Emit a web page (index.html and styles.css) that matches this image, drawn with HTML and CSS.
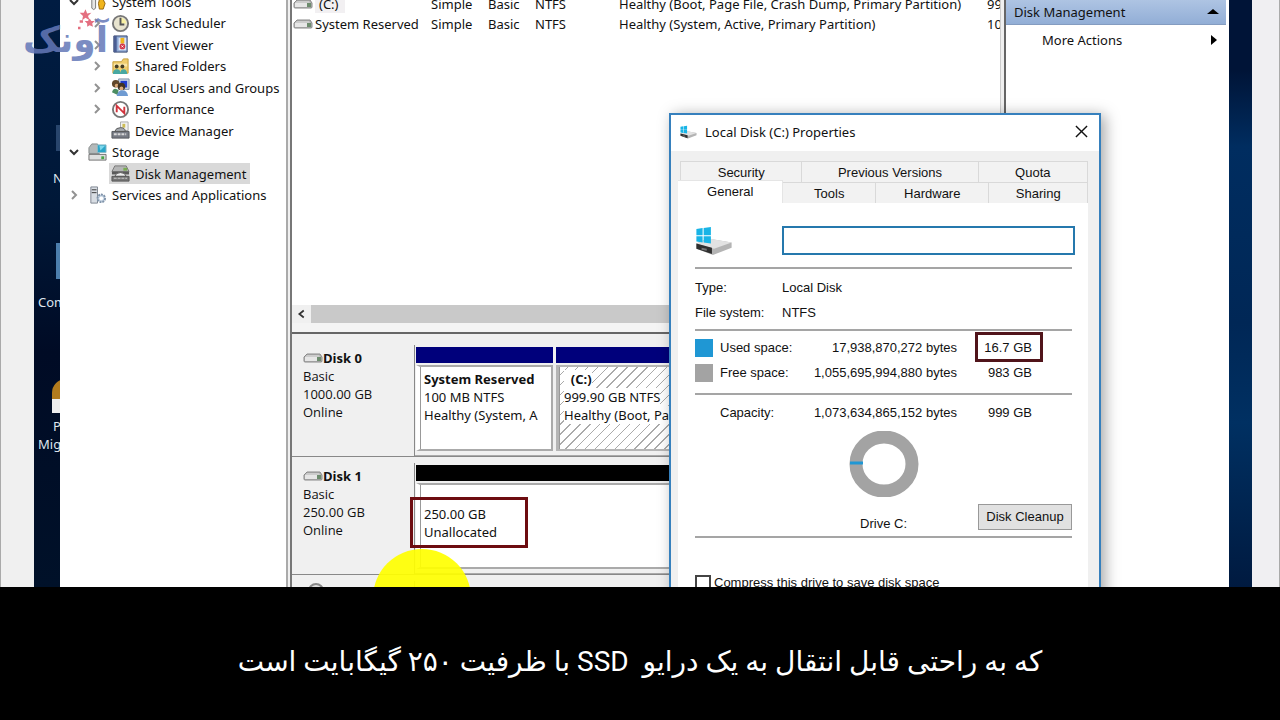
FILE: index.html
```html
<!DOCTYPE html>
<html lang="fa">
<head>
<meta charset="utf-8">
<title>Disk Management</title>
<link rel="stylesheet" href="styles.css">
</head>
<body>
<svg class="defs" aria-hidden="true">
  <symbol id="right" viewBox="0 0 16 16"><path d="M6 4l4 4-4 4" fill="none" stroke="#929292" stroke-width="2"/></symbol>
  <symbol id="down" viewBox="0 0 16 16"><path d="M4 6l4 4 4-4" fill="none" stroke="#333" stroke-width="2"/></symbol>
  <symbol id="drive" viewBox="0 0 20 12"><path d="M4 2h13l2 3v4q0 1-1 1H2q-1 0-1-1V5z" fill="#b5b5b5" stroke="#888"/><path d="M4 3h12l1 2H2z" fill="#ccc"/><path d="M2 5h12v4H2z" fill="#e6e6e6"/><path d="M14 5h4v4h-4z" fill="#6d8c6e"/></symbol>
  <symbol id="windrive" viewBox="0 0 36 28"><path d="M1 17l11-5 23 4v5l-18 7L1 22z" fill="#b4b4b4"/><path d="M1 17l12-5 22 4-17 6z" fill="#e2e2e2"/><path d="M1 17l15 4v6L1 22z" fill="#2f2f2f"/><path d="M6 21l5 1v2l-5-1z" fill="#777"/><path d="M1 3l6-1v7H1zm7-1l7-1v8H8zM1 10h6v6l-6-1zm7 0h7v7l-7-1z" fill="#18b4e6"/></symbol>
</svg>

<main class="screen">
  <div class="gutter gutter-left"></div>
  <div class="desktop desktop-left">
    <div class="shortcut s1"><span class="pic"></span><span class="short">N</span></div>
    <div class="shortcut s2"><span class="pic"></span><span>Computer</span></div>
    <div class="shortcut s3"><span class="pic gold"></span><span class="short">P</span><span>Migrate</span></div>
  </div>

  <section class="window">
    <nav class="tree">
      <ul>
        <li><button class="chev" aria-label="Collapse"><svg><use href="#down"/></svg></button><span class="item"><svg class="ico" viewBox="0 0 20 20"><path d="M4 1h4v16q-2 3-4 0z" fill="#e6e6e6" stroke="#777"/><path d="M12 1h4v7l2 4-2 6h-4l-1-6 1-4z" fill="#f0b51d" stroke="#93640c"/></svg>System Tools</span></li>
        <li class="sub"><button class="chev" aria-label="Expand"><svg><use href="#right"/></svg></button><span class="item"><svg class="ico" viewBox="0 0 20 20"><circle cx="10" cy="10" r="8" fill="#e8e4cf" stroke="#777" stroke-width="2"/><path d="M10 4a6 6 0 0 1 6 6h-6z" fill="#f8f1a4"/><path d="M10 4v7h4" fill="none" stroke="#555" stroke-width="2"/></svg>Task Scheduler</span></li>
        <li class="sub"><button class="chev" aria-label="Expand"><svg><use href="#right"/></svg></button><span class="item"><svg class="ico" viewBox="0 0 20 20"><path d="M3 1h14v17H3z" fill="#8da8d4" stroke="#384870"/><path d="M3 1h3v17H3z" fill="#4b5d92"/><path d="M8 3h8v13H8z" fill="#dde4f3"/><path d="M10 3h4v6h-4z" fill="#f0b51d"/><circle cx="12" cy="12" r="3" fill="#d33648"/><path d="M11 11l2 2m0-2l-2 2" stroke="#fff"/></svg>Event Viewer</span></li>
        <li class="sub"><button class="chev" aria-label="Expand"><svg><use href="#right"/></svg></button><span class="item"><svg class="ico" viewBox="0 0 20 20"><path d="M2 5h9l2-3h5v15H2z" fill="#f0cd6c" stroke="#c49c37"/><path d="M3 7h14v3H3z" fill="#f9e6a8"/><circle cx="6" cy="10" r="2" fill="#463e25"/><circle cx="12" cy="10" r="2" fill="#463e25"/><path d="M2 18q0-5 4-5t4 4q0-4 3-4 4 0 4 5z" fill="#48a8a2"/></svg>Shared Folders</span></li>
        <li class="sub"><button class="chev" aria-label="Expand"><svg><use href="#right"/></svg></button><span class="item"><svg class="ico" viewBox="0 0 20 20"><path d="M8 1h11v11H8z" fill="#c9d4e4" stroke="#8290a5"/><path d="M10 3h7v7h-7z" fill="#203ccc"/><circle cx="5" cy="6" r="4" fill="#60472b"/><circle cx="6" cy="8" r="2" fill="#dcaa79"/><circle cx="11" cy="9" r="4" fill="#423323"/><circle cx="11" cy="11" r="2" fill="#dcaa79"/><path d="M1 15q2-6 7-2l-1 5z" fill="#4b8d61"/><path d="M6 19q1-6 6-6t6 6z" fill="#6f9bd2"/></svg>Local Users and Groups</span></li>
        <li class="sub"><button class="chev" aria-label="Expand"><svg><use href="#right"/></svg></button><span class="item"><svg class="ico" viewBox="0 0 20 20"><circle cx="10" cy="10" r="8" fill="#fff" stroke="#777" stroke-width="2"/><path d="M6 13V6l8 8V7" fill="none" stroke="#d1323b" stroke-width="2"/></svg>Performance</span></li>
        <li class="sub"><span class="chev"></span><span class="item"><svg class="ico" viewBox="0 0 20 20"><path d="M10 1h8v9h-8z" fill="#f1f1f1" stroke="#aaa"/><path d="M12 3h3v4h-3z" fill="#cdbd55"/><path d="M1 11h18v7H1z" fill="#777b84" stroke="#53565c"/><path d="M4 11q1-4 6-4t5 4z" fill="#a5a9af" stroke="#555"/><path d="M3 14h13" stroke="#d9d9d9" stroke-width="2" stroke-dasharray="3 1"/></svg>Device Manager</span></li>
        <li><button class="chev" aria-label="Collapse"><svg><use href="#down"/></svg></button><span class="item"><svg class="ico" viewBox="0 0 20 20"><path d="M4 1h6l2 10H1V5z" fill="#b4b9ba" stroke="#85898a"/><path d="M10 2h9v8h-9z" fill="#29a5c8" stroke="#8bb9c6"/><path d="M12 3h6l-5 5z" fill="#7cd7ec"/><path d="M1 12h18v6H1z" fill="#dedede" stroke="#717171"/><path d="M14 14h3v3h-3z" fill="#4aa647"/></svg>Storage</span></li>
        <li class="sub"><span class="chev"></span><span class="item selected"><svg class="ico" viewBox="0 0 20 20"><path d="M4 2h12l3 6H1z" fill="#b4b5b5" stroke="#777"/><path d="M1 8h18v3H1z" fill="#5b5b5b"/><path d="M13 4h4v3h-4z" fill="#79ac51"/><path d="M4 13q1-4 6-4t6 4z" fill="#eee" stroke="#555"/><path d="M1 13h18v5H1z" fill="#777" stroke="#555"/><path d="M3 15h14" stroke="#ccc" stroke-dasharray="3 1"/></svg>Disk Management</span></li>
        <li><button class="chev" aria-label="Expand"><svg><use href="#right"/></svg></button><span class="item"><svg class="ico" viewBox="0 0 20 20"><path d="M3 1h7v17H3z" fill="#d8dde3" stroke="#7d858f"/><path d="M4 4h5M4 7h5" stroke="#333"/><circle cx="14" cy="13" r="4" fill="#c1d0e0" stroke="#8094aa" stroke-width="2" stroke-dasharray="2 1"/><circle cx="14" cy="13" r="2" fill="#fff"/></svg>Services and Applications</span></li>
      </ul>
    </nav>
    <div class="splitter"></div>

    <div class="center">
      <div class="volumes">
        <table>
          <tr><td class="c-name"><svg class="drv"><use href="#drive"/></svg><span class="cell-hot">(C:)</span></td><td class="c-lay">Simple</td><td class="c-type">Basic</td><td class="c-fs">NTFS</td><td class="c-stat">Healthy (Boot, Page File, Crash Dump, Primary Partition)</td><td>99</td></tr>
          <tr><td class="c-name"><svg class="drv"><use href="#drive"/></svg>System Reserved</td><td>Simple</td><td>Basic</td><td>NTFS</td><td>Healthy (System, Active, Primary Partition)</td><td>100</td></tr>
        </table>
      </div>
      <div class="hscroll"><button aria-label="Scroll left"><svg viewBox="0 0 16 16"><path d="M10 4L5 8l5 4" fill="none" stroke="#333" stroke-width="2"/></svg></button><span class="thumb"></span></div>
      <div class="disks">
        <div class="disk">
          <div class="disk-label"><strong><svg class="drv"><use href="#drive"/></svg>Disk 0</strong><span>Basic</span><span>1000.00 GB</span><span>Online</span></div>
          <div class="parts">
            <div class="part small"><div class="bar"></div><div class="box"><strong>System Reserved</strong><span>100 MB NTFS</span><span>Healthy (System, A</span></div></div>
            <div class="part"><div class="bar"></div><div class="box hatch"><strong>&nbsp;&nbsp;(C:)</strong><span>999.90 GB NTFS</span><span>Healthy (Boot, Page File, Crash Dump, Primary Partition)</span></div></div>
          </div>
        </div>
        <div class="disk">
          <div class="disk-label"><strong><svg class="drv"><use href="#drive"/></svg>Disk 1</strong><span>Basic</span><span>250.00 GB</span><span>Online</span></div>
          <div class="parts">
            <div class="part"><div class="bar black"></div><div class="box free"><span>250.00 GB</span><span>Unallocated</span></div></div>
          </div>
        </div>
        <div class="disk last">
          <div class="disk-label"><svg class="cd" viewBox="0 0 20 20"><circle cx="10" cy="10" r="7" fill="#ddd" stroke="#888" stroke-width="2"/></svg></div>
          <div class="parts"></div>
        </div>
      </div>
    </div>
    <div class="splitter right"></div>

    <aside class="actions">
      <button class="act-head">Disk Management<svg viewBox="0 0 12 12"><path d="M0 8l6-5 6 5z"/></svg></button>
      <button class="act-more">More Actions<svg viewBox="0 0 12 12"><path d="M3 1l6 5-6 5z"/></svg></button>
    </aside>
  </section>

  <div class="desktop desktop-right"></div>
  <div class="gutter gutter-right"></div>

  <div class="spot"></div>
  <div class="mark"></div>

  <section class="dialog">
    <header><svg class="t-ico"><use href="#windrive"/></svg><h1>Local Disk (C:) Properties</h1><button class="close" aria-label="Close"><svg viewBox="0 0 14 14"><path d="M1 1l12 12M13 1L1 13" stroke="#111" stroke-width="1.5"/></svg></button></header>
    <div class="sheet">
      <div class="tabs row1"><button>Security</button><button>Previous Versions</button><button>Quota</button></div>
      <div class="tabs row2"><button class="active">General</button><button>Tools</button><button>Hardware</button><button>Sharing</button></div>
      <div class="panel">
        <div class="name-row"><svg class="big"><use href="#windrive"/></svg><input type="text" aria-label="Volume label"></div>
        <dl class="facts"><dt>Type:</dt><dd>Local Disk</dd><dt>File system:</dt><dd>NTFS</dd></dl>
        <table class="usage">
          <tr><td class="sw"><i class="used"></i></td><th>Used space:</th><td class="bytes">17,938,870,272 bytes</td><td class="gb"><span class="ring">16.7 GB</span></td></tr>
          <tr><td class="sw"><i class="unused"></i></td><th>Free space:</th><td class="bytes">1,055,695,994,880 bytes</td><td class="gb">983 GB</td></tr>
        </table>
        <table class="usage capacity">
          <tr><td class="sw"></td><th>Capacity:</th><td class="bytes">1,073,634,865,152 bytes</td><td class="gb">999 GB</td></tr>
        </table>
        <svg class="donut" viewBox="0 0 70 66"><ellipse cx="35" cy="33" rx="28" ry="27" fill="none" stroke="#a3a3a3" stroke-width="13"/><path d="M1 32h13" stroke="#1f97d4" stroke-width="3"/></svg>
        <div class="drive-row"><span>Drive C:</span><button>Disk Cleanup</button></div>
        <label class="compress"><input type="checkbox">Compress this drive to save disk space</label>
      </div>
    </div>
  </section>

  <div class="logo" lang="fa"><svg viewBox="0 0 36 28"><g fill="#e0566a"><path d="M21 0l2 5 5-1-4 4 2 5-5-3-4 3 1-5-4-4h5z"/><path d="M26 11l2 3 4 0-3 3 1 4-4-2-3 2 0-4-3-3h4z"/><path d="M14 13h4v3h-4zM12 21h3v3h-3z"/></g></svg><span>آونک</span></div>
</main>

<footer class="subtitle" dir="rtl"><p>که به راحتی قابل انتقال به یک درایو &nbsp;SSD با ظرفیت ۲۵۰ گیگابایت است</p></footer>
</body>
</html>
```
FILE: styles.css
```css
* { box-sizing: border-box; }
body {
  margin: 0;
  height: 100vh;
  display: flex;
  flex-direction: column;
  background: #000;
  color: #111;
  font: 13px/18px "Noto Sans", "Open Sans", sans-serif;
}
button, input { font: inherit; color: inherit; }
button { padding: 0; border: 0; background: none; }
.defs { position: absolute; width: 0; height: 0; }

.screen {
  position: relative;
  flex: 1;
  min-height: 0;
  display: flex;
  overflow: hidden;
  white-space: nowrap;
}
.gutter { background: #f0f0f0; }
.gutter-left { flex: 0 0 34px; border-left: 1px solid #aaa; }
.gutter-right { flex: 0 0 28px; border-right: 1px solid #aaa; background: #f0eff2; }
.desktop-left {
  flex: 0 0 26px;
  overflow: hidden;
  background: linear-gradient(#001c42, #001838 35%, #000b25 60%, #001129);
  color: #dfe5ee;
}
.desktop-right {
  flex: 0 0 23px;
  background: linear-gradient(#001437, #001437 12%, #002d60 25%, #002756 55%, #003062 72%, #001a40);
}
.shortcut { display: flex; flex-direction: column; padding-left: 4px; }
.shortcut .short { padding-left: 15px; }
.shortcut .pic { width: 20px; height: 36px; margin-left: 18px; background: #4c7eac; }
.shortcut .gold { height: 34px; background: linear-gradient(#b27b1d 58%, #eee 58%); margin-left: 14px; border-radius: 14px 0 0 0; }
.s1 { padding-top: 125px; }
.s1 .pic { background: #28456c; margin-bottom: 18px; height: 26px; }
.s2 { padding-top: 56px; }
.s2 .pic { margin-bottom: 14px; }
.s3 { padding-top: 68px; }
.s3 .pic { margin-bottom: 4px; }

.window { flex: 1; min-width: 0; display: flex; background: #fff; }
.tree { flex: 0 0 226px; overflow: hidden; }
.tree ul {
  list-style: none;
  margin: -9px 0 0;
  padding: 0;
  height: 215px;
  display: grid;
  grid-template-rows: repeat(10, 1fr);
}
.tree li { display: flex; align-items: center; padding-left: 6px; }
.tree li.sub { padding-left: 29px; }
.chev { width: 16px; height: 16px; margin-right: 4px; display: flex; flex: none; }
.chev svg { width: 16px; height: 16px; }
.item { display: flex; align-items: center; gap: 5px; height: 21px; padding: 0 4px 0 2px; }
.item.selected { background: #d9d9d9; }
.ico { width: 19px; height: 19px; flex: none; }

.splitter { flex: 0 0 6px; border-left: 2px solid #aaa; border-right: 2px solid #777; background: #f0f0f0; }
.splitter.right { border-left: 1px solid #ccc; border-right-color: #666; }

.center { flex: 1; min-width: 0; display: flex; flex-direction: column; }
.volumes { flex: 0 0 305px; overflow: hidden; }
.volumes table { border-collapse: collapse; table-layout: fixed; width: 720px; margin-top: -6px; }
.volumes td { padding: 0; height: 20px; overflow: hidden; }
.c-name { width: 139px; }
.c-lay { width: 57px; }
.c-type { width: 47px; }
.c-fs { width: 84px; }
.c-stat { width: 368px; }
.cell-hot { background: #f2f0f2; padding: 0 6px 0 4px; }
.drv { width: 20px; height: 12px; margin: 0 2px 0 1px; vertical-align: -1px; }
.hscroll { flex: 0 0 27px; display: flex; background: #f0f0f0; border-bottom: 9px solid #f4f4f4; }
.hscroll button { width: 19px; display: grid; place-items: center; }
.hscroll svg { width: 14px; height: 14px; }
.thumb { flex: 1; background: #c9c9c9; }

.disks { flex: 1; min-height: 0; overflow: hidden; border-top: 2px solid #666; background: #f0f0f0; }
.disk { display: flex; height: 118px; padding-top: 6px; border-bottom: 1px solid #888; }
.disk:first-child { height: 123px; padding-top: 11px; }
.disk-label {
  flex: 0 0 123px;
  display: flex;
  flex-direction: column;
  padding: 4px 0 0 11px;
  border-right: 1px solid #888;
  font-family: "Open Sans", "Noto Sans", sans-serif;
}
.disk-label .drv { margin-left: 0; margin-right: 0; }
.parts { flex: 1; min-width: 0; display: flex; gap: 2px; border-bottom: 1px solid #aaa; }
.part { flex: 1; min-width: 0; padding: 2px 0 4px 1px; display: flex; flex-direction: column; }
.part.small { flex: 0 0 138px; }
.bar { height: 16px; background: #00007b; }
.bar.black { background: #000; }
.box {
  flex: 1;
  display: flex;
  flex-direction: column;
  overflow: hidden;
  margin-top: 2px;
  padding: 3px 0 0 4px;
  background: #fff;
  border: 2px solid #aaa;
  border-width: 2px 2px 2px 0;
  border-left: 4px solid #fff;
  box-shadow: inset 1px 0 #999;
}
.box.free { padding-top: 20px; }
.hatch {
  background: repeating-linear-gradient(135deg, #fff 0 6px, #aaa 6px 7px);
  border-color: #b5b5b5;
  border-left-width: 3px;
  padding-left: 5px;
}
.hatch strong, .hatch span { align-self: flex-start; background: #fff; }
.last { border: 0; }
.cd { width: 20px; height: 20px; margin: -4px 0 0 3px; }

.actions { flex: 0 0 223px; padding-right: 3px; }
.actions button { display: flex; align-items: center; justify-content: space-between; width: 100%; }
.actions .act-head { height: 25px; padding: 0 7px 0 8px; background: linear-gradient(#aec4e3, #92aed6); border-bottom: 1px solid #849cc0; }
.actions .act-more { height: 30px; padding: 0 6px 0 36px; }
.actions svg { width: 12px; height: 12px; }

.spot { position: absolute; left: 373px; top: 549px; width: 98px; height: 98px; border-radius: 50%; background: #ff0; opacity: .92; }
.mark { position: absolute; left: 410px; top: 497px; width: 118px; height: 51px; border: 3px solid #6d0c10; }

.dialog {
  position: absolute;
  left: 669px;
  top: 113px;
  width: 432px;
  height: 520px;
  display: flex;
  flex-direction: column;
  background: #f0f0f0;
  border: 2px solid #3680bd;
  box-shadow: 4px 2px 14px rgba(0, 0, 0, .35);
}
.dialog header { display: flex; align-items: center; height: 36px; padding: 0 9px 3px 9px; background: #fff; }
.dialog h1 { flex: 1; margin: 0 0 0 8px; font-size: 13px; font-weight: 400; }
.t-ico { width: 17px; height: 14px; }
.close { width: 18px; height: 18px; display: grid; place-items: center; }
.close svg { width: 13px; height: 13px; }
.sheet { flex: 1; display: flex; flex-direction: column; padding: 10px 11px 0 7px; font: 13px/18px "Liberation Sans", Arial, sans-serif; }
.tabs { display: flex; height: 21px; margin-left: 2px; }
.tabs button { padding-top: 1px; border: 1px solid #d9d9d9; border-bottom: 0; border-left-width: 0; background: #f2f2f2; }
.row1 button:nth-child(1) { flex: 121; border-left-width: 1px; }
.row1 button:nth-child(2) { flex: 176; }
.row1 button:nth-child(3) { flex: 109; }
.row2 button:nth-child(1) { flex: 105; }
.row2 button:nth-child(2) { flex: 92; }
.row2 button:nth-child(3) { flex: 113; }
.row2 button:nth-child(4) { flex: 98; }
.row2 { margin-left: 0; }
.row2 button.active { background: #fff; margin: -2px 0 -1px; padding-bottom: 3px; border-color: #e5e5e5; }
.panel { flex: 1; background: #fff; padding: 23px 13px 0 17px; }
.name-row { display: flex; justify-content: space-between; align-items: center; }
.big { width: 38px; height: 29px; }
.name-row input { width: 293px; height: 29px; padding: 0 6px; border: 2px solid #2578ad; background: #fff; }
.facts {
  display: grid;
  grid-template-columns: 87px 1fr;
  grid-auto-rows: 25px;
  align-items: center;
  margin: 12px 3px 0 0;
  padding: 6px 0 4px;
  border-top: 2px solid #a5a5a5;
  border-bottom: 2px solid #a5a5a5;
}
.facts dd { margin: 0; }
.usage { width: 377px; margin-top: 4px; border-collapse: collapse; table-layout: fixed; }
.usage td, .usage th { height: 25px; padding: 0; text-align: left; font-weight: 400; }
.usage .sw { width: 25px; }
.sw i { display: block; width: 18px; height: 18px; }
.used { background: #1f97d4; }
.unused { background: #a3a3a3; }
.usage .bytes { width: 150px; text-align: right; }
.usage .gb { width: 115px; padding-right: 40px; text-align: right; }
.ring { position: relative; }
.ring::after { content: ""; position: absolute; left: -9px; right: -11px; top: -8px; bottom: -7px; border: 3px solid #50141a; }
.capacity { margin-top: 8px; border-top: 2px solid #a5a5a5; border-spacing: 0; border-collapse: separate; padding-top: 5px; }
.donut { display: block; width: 70px; height: 66px; margin: 6px auto 0 154px; }
.drive-row { display: flex; justify-content: flex-end; align-items: flex-end; gap: 71px; margin-right: 3px; padding: 7px 0 6px; border-bottom: 2px solid #a5a5a5; }
.drive-row span { line-height: 12px; }
.drive-row button { width: 94px; height: 26px; border: 1px solid #999; background: #e1e1e1; }
.compress { display: flex; align-items: center; gap: 3px; margin-top: 36px; }
.compress input { appearance: none; width: 16px; height: 16px; margin: 0; border: 2px solid #444; background: #fff; }

.logo { position: absolute; left: 20px; top: 8px; width: 90px; height: 54px; color: #6478b8; opacity: .85; }
.logo svg { position: absolute; left: 48px; top: 1px; width: 30px; height: 24px; }
.logo span { position: absolute; right: 2px; bottom: 0; font: bold 36px/44px "DejaVu Sans", sans-serif; }

.subtitle { flex: 0 0 133px; display: flex; justify-content: center; align-items: center; background: #000; color: #fff; }
.subtitle p { margin: 0; padding-top: 16px; font: 28px/40px Roboto, "DejaVu Sans", sans-serif; }
```
